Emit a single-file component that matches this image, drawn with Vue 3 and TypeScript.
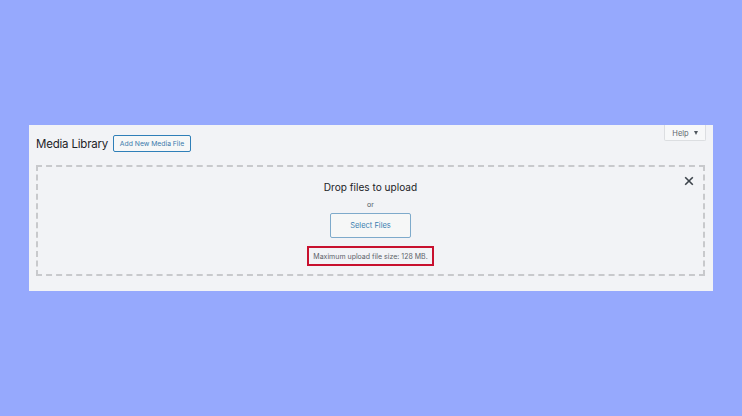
<script setup lang="ts">
const title: string = 'Media Library'
</script>

<template>
  <div class="page">
    <section class="panel">
      <div class="help">Help <span class="caret"></span></div>
      <header class="head">
        <h1>{{ title }}</h1>
        <button class="add">Add New Media File</button>
      </header>
      <div class="drop">
        <svg class="close" viewBox="0 0 10 10" width="10" height="10">
          <path d="M1.2 1.2 L8.8 8.8 M8.8 1.2 L1.2 8.8" stroke="#3c434a" stroke-width="1.6" fill="none" />
        </svg>
        <h2>Drop files to upload</h2>
        <p class="or">or</p>
        <button class="select">Select Files</button>
        <p class="max">Maximum upload file size: 128 MB.</p>
      </div>
    </section>
  </div>
</template>

<style>
html, body { margin: 0; }
</style>

<style scoped>
.page {
  width: 742px;
  height: 416px;
  box-sizing: border-box;
  padding: 125px 29px;
  background: #96a9fd;
  font-family: Inter, "Liberation Sans", sans-serif;
  overflow: hidden;
}
.panel {
  position: relative;
  height: 166px;
  box-sizing: border-box;
  padding: 10px 8px 16px 7px;
  background: #f2f3f6;
}
.help {
  position: absolute;
  top: 0;
  right: 7px;
  width: 42px;
  height: 16px;
  box-sizing: border-box;
  padding-top: 1px;
  border: 1px solid #dcdee1;
  border-top: none;
  border-radius: 0 0 2px 2px;
  background: #f7f8f9;
  color: #60666c;
  font-size: 7.5px;
  display: flex;
  align-items: center;
  justify-content: center;
  gap: 5px;
}
.caret {
  width: 0;
  height: 0;
  border-left: 2.5px solid transparent;
  border-right: 2.5px solid transparent;
  border-top: 4px solid #50575e;
}
.head {
  display: flex;
  align-items: center;
  gap: 5px;
  height: 17px;
  margin-bottom: 13px;
}
h1 {
  margin: 0;
  width: 72px;
  flex: none;
  font-size: 11.5px;
  letter-spacing: -0.2px;
  font-weight: 400;
  color: #1d2327;
  white-space: nowrap;
}
.add {
  width: 78px;
  height: 17px;
  padding: 0;
  border: 1px solid #2f7fb8;
  border-radius: 2px;
  background: #f6f7f7;
  color: #3a7aab;
  font: 400 6.8px Inter, "Liberation Sans", sans-serif;
  white-space: nowrap;
}
.drop {
  position: relative;
  height: 111px;
  box-sizing: border-box;
  border: 2px dashed #c8c9cc;
  display: flex;
  flex-direction: column;
  align-items: center;
  padding-top: 13px;
}
.close {
  position: absolute;
  top: 9px;
  right: 9px;
}
h2 {
  margin: 0;
  font-size: 10.1px;
  line-height: 14px;
  font-weight: 400;
  color: #1d2327;
}
.or {
  margin: 6px 0 0;
  font-size: 7px;
  line-height: 10px;
  color: #50575e;
}
.select {
  width: 81px;
  height: 25px;
  margin-top: 3px;
  padding: 0;
  border: 1px solid #7eaacb;
  border-radius: 2px;
  background: #f6f7f7;
  color: #3a7db0;
  font: 400 7.5px Inter, "Liberation Sans", sans-serif;
}
.max {
  margin: 8px 0 0;
  width: 127px;
  height: 20px;
  box-sizing: border-box;
  border: 2px solid #c8102e;
  display: flex;
  align-items: center;
  justify-content: center;
  font-size: 7px;
  color: #5a6167;
  white-space: nowrap;
}
</style>
